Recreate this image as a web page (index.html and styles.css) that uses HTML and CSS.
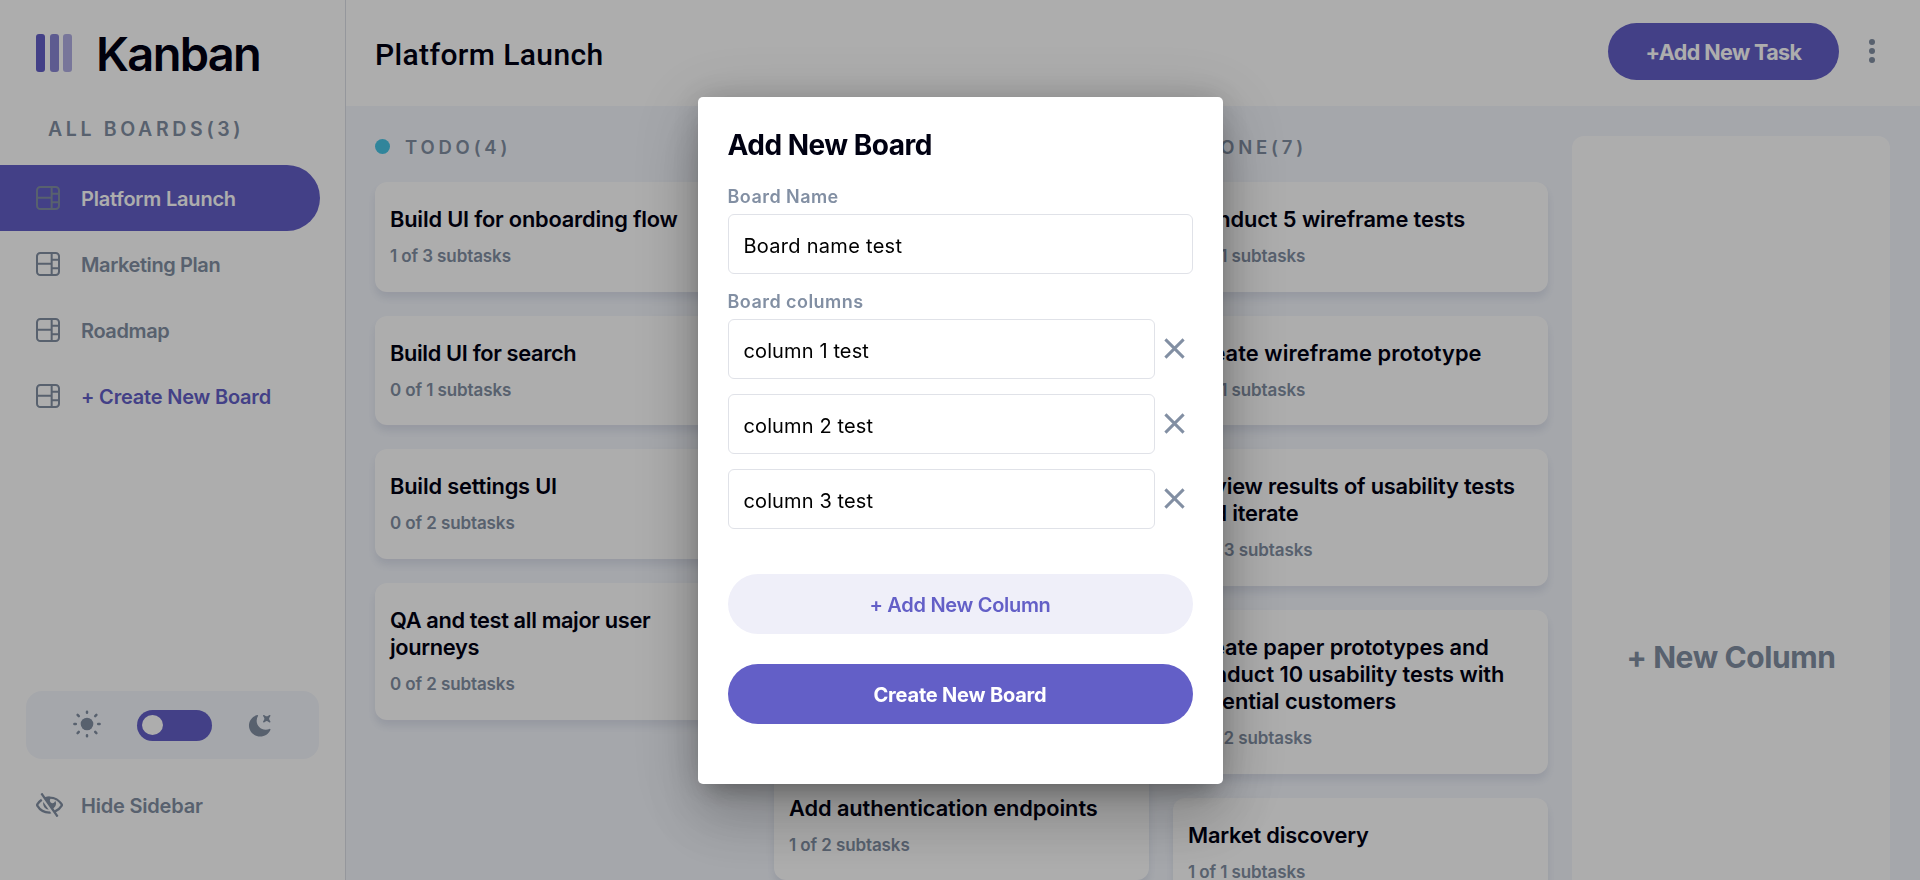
FILE: index.html
```html
<!DOCTYPE html>
<html lang="en">
<head>
<meta charset="utf-8">
<title>Kanban</title>
<link rel="stylesheet" href="styles.css">
</head>
<body>
<svg width="0" height="0" class="defs">
  <symbol id="board" viewBox="0 0 16 16"><path d="M0 2.889A2.889 2.889 0 0 1 2.889 0H13.11A2.889 2.889 0 0 1 16 2.889V13.11A2.888 2.888 0 0 1 13.111 16H2.89A2.889 2.889 0 0 1 0 13.111V2.89Zm1.333 5.555v4.667c0 .859.697 1.556 1.556 1.556h6.889V8.444H1.333Zm8.445-1.333V1.333h-6.89A1.556 1.556 0 0 0 1.334 2.89V7.11h8.445Zm4.889-1.333H11.11v4.444h3.556V5.778Zm0 5.778H11.11v3.11h2a1.556 1.556 0 0 0 1.556-1.555v-1.555Zm0-7.112V2.89a1.555 1.555 0 0 0-1.556-1.556h-2v3.111h3.556Z"/></symbol>
  <symbol id="cross" viewBox="0 0 21 21"><path d="M1.4 1.4l18.2 18.2M19.6 1.4L1.4 19.6" stroke="currentColor" stroke-width="3" fill="none"/></symbol>
</svg>
<div class="app">
  <aside class="sidebar">
    <div class="brand">
      <div class="bars"><i></i><i></i><i></i></div>
      <span class="wordmark">Kanban</span>
    </div>
    <h2 class="boards-title">ALL BOARDS(3)</h2>
    <nav class="nav">
      <a class="item active"><svg class="ico"><use href="#board"/></svg><span class="t-platform">Platform Launch</span></a>
      <a class="item"><svg class="ico"><use href="#board"/></svg><span>Marketing Plan</span></a>
      <a class="item"><svg class="ico"><use href="#board"/></svg><span>Roadmap</span></a>
      <a class="item create"><svg class="ico"><use href="#board"/></svg><span>+ Create New Board</span></a>
    </nav>
    <div class="theme">
      <svg class="sun" viewBox="0 0 28 28" stroke="currentColor" stroke-width="2.5" stroke-linecap="round"><circle cx="14" cy="14" r="6.3" stroke="none"/><path d="M14 1.7v1M14 25.3v1M1.4 14h1.4M25.2 14h1.4M4.6 4.9l1.2 1.2M22.2 21.9l1.2 1.2M23.4 4.9l-1.2 1.2M5.8 21.9l-1.2 1.2"/></svg>
      <div class="switch"><i></i></div>
      <svg class="moon" viewBox="0 0 16 16"><path d="M6.474.682c.434-.11.718.406.481.78A6.067 6.067 0 0 0 6.01 4.72c0 3.418 2.827 6.187 6.314 6.187.89.002 1.77-.182 2.584-.54.408-.18.894.165.724.57-1.16 2.775-3.944 4.73-7.194 4.73-4.292 0-7.771-3.41-7.771-7.615 0-3.541 2.466-6.518 5.807-7.37Zm8.433.07c.442-.294.969.232.674.674l-.525.787a1.943 1.943 0 0 0 0 2.157l.525.788c.295.441-.232.968-.674.673l-.787-.525a1.943 1.943 0 0 0-2.157 0l-.786.525c-.442.295-.97-.232-.675-.673l.525-.788a1.943 1.943 0 0 0 0-2.157l-.525-.787c-.295-.442.232-.968.674-.673l.787.525a1.943 1.943 0 0 0 2.157 0l.787-.525Z"/></svg>
    </div>
    <a class="hide"><svg class="eye" viewBox="0 0 18 16"><path d="M8.522 11.223a4.252 4.252 0 0 1-3.654-5.22l3.654 5.22ZM9 12.25A8.685 8.685 0 0 1 1.5 8a8.612 8.612 0 0 1 2.76-2.864l-.86-1.23A10.112 10.112 0 0 0 .208 7.238a1.5 1.5 0 0 0 0 1.524A10.187 10.187 0 0 0 9 13.75c.414 0 .828-.025 1.239-.074l-1-1.43A8.88 8.88 0 0 1 9 12.25Zm8.792-3.488a10.14 10.14 0 0 1-4.486 4.046l1.504 2.148a.375.375 0 0 1-.092.523l-.648.453a.375.375 0 0 1-.523-.092L3.19 1.044A.375.375 0 0 1 3.282.52L3.93.068a.375.375 0 0 1 .523.092l1.735 2.479A10.308 10.308 0 0 1 9 2.25c3.746 0 7.031 2 8.792 4.988a1.5 1.5 0 0 1 0 1.524ZM16.5 8a8.674 8.674 0 0 0-6.755-4.219A1.75 1.75 0 1 0 12.75 5v-.001a4.25 4.25 0 0 1-1.154 5.366l.834 1.192A8.641 8.641 0 0 0 16.5 8Z"/></svg><span>Hide Sidebar</span></a>
  </aside>
  <div class="main">
    <header class="header">
      <h1>Platform Launch</h1>
      <button class="add-task">+Add New Task</button>
      <div class="dots"><i></i><i></i><i></i></div>
    </header>
    <main class="board">
      <section class="column">
        <h3><i class="dot todo"></i>TODO(4)</h3>
        <article class="card"><h4>Build UI for onboarding flow</h4><p>1 of 3 subtasks</p></article>
        <article class="card"><h4 class="tight">Build UI for search</h4><p>0 of 1 subtasks</p></article>
        <article class="card"><h4>Build settings UI</h4><p>0 of 2 subtasks</p></article>
        <article class="card"><h4 class="tight">QA and test all major user<br>journeys</h4><p>0 of 2 subtasks</p></article>
      </section>
      <section class="column">
        <h3><i class="dot doing"></i>DOING(6)</h3>
        <article class="card"><h4>Design settings and search<br>pages</h4><p>1 of 3 subtasks</p></article>
        <article class="card"><h4>Add account management<br>endpoints</h4><p>2 of 3 subtasks</p></article>
        <article class="card"><h4>Design onboarding flow</h4><p>1 of 3 subtasks</p></article>
        <article class="card"><h4>Add search endpoints</h4><p>1 of 2 subtasks</p></article>
        <article class="card"><h4 class="wide">Add authentication endpoints</h4><p>1 of 2 subtasks</p></article>
      </section>
      <section class="column">
        <h3><i class="dot done"></i>DONE(7)</h3>
        <article class="card"><h4 class="wide">Conduct 5 wireframe tests</h4><p>1 of 1 subtasks</p></article>
        <article class="card"><h4 class="wider">Create wireframe prototype</h4><p>1 of 1 subtasks</p></article>
        <article class="card"><h4>Review results of usability tests<br>and iterate</h4><p>3 of 3 subtasks</p></article>
        <article class="card"><h4 class="wide">Create paper prototypes and<br>conduct 10 usability tests with<br>potential customers</h4><p>2 of 2 subtasks</p></article>
        <article class="card"><h4>Market discovery</h4><p>1 of 1 subtasks</p></article>
      </section>
      <section class="new-column">+ New Column</section>
    </main>
  </div>
</div>
<div class="overlay">
  <form class="modal">
    <h2>Add New Board</h2>
    <label>Board Name</label>
    <input class="name" value="Board name test">
    <label>Board columns</label>
    <div class="rows">
      <div class="row"><input value="column 1 test"><svg><use href="#cross"/></svg></div>
      <div class="row"><input value="column 2 test"><svg><use href="#cross"/></svg></div>
      <div class="row"><input value="column 3 test"><svg><use href="#cross"/></svg></div>
    </div>
    <button type="button" class="secondary">+ Add New Column</button>
    <button type="button" class="primary">Create New Board</button>
  </form>
</div>
</body>
</html>
```

FILE: styles.css
```css
*{box-sizing:border-box;margin:0;padding:0}
body{height:880px;overflow:hidden;font-family:Inter,"Liberation Sans",sans-serif;color:#000112}
i{display:block}
svg{fill:currentColor;display:block;flex:none}
button{border:0;font-family:inherit}
.defs{position:absolute}
.app{display:flex;height:880px;overflow:hidden;background:#f4f7fd}

.sidebar{width:346px;flex:none;background:#fff;border-right:1px solid #dcdfe6;color:#828fa3;display:flex;flex-direction:column}
.brand{display:flex;align-items:center;gap:24px;height:106px;padding-left:36px}
.bars{display:flex;gap:4.5px}
.bars i{width:9px;height:38px;border-radius:3px;background:#635fc7}
.bars i:nth-child(2){opacity:.75}
.bars i:nth-child(3){opacity:.5}
.wordmark{font-size:47px;font-weight:600;letter-spacing:-1.7px;line-height:60px;color:#000112;padding-top:2px}
.boards-title{font-size:19.5px;font-weight:600;letter-spacing:3.65px;line-height:30px;padding:8px 0 0 48px}
.nav{margin-top:21px}
.item{display:flex;align-items:center;height:66px;width:320px;padding-left:36px;gap:21px;border-radius:0 33px 33px 0;font-size:20px;font-weight:600;letter-spacing:-.4px}
.item .ico{width:24px;height:24px}
.item span{padding-top:2px}
.item .t-platform{letter-spacing:-.2px}
.item.active{background:#635fc7}
.item.active span{color:#fff}
.item.create span{color:#635fc7;letter-spacing:-.2px}
.theme{margin:262px 26px 0;height:68px;border-radius:16px;background:#f4f7fd;display:flex;align-items:center;padding-left:47px;width:293px}
.sun{width:28px;height:28px;margin-top:-2px}
.switch{width:75px;height:31px;border-radius:16px;background:#635fc7;margin:0 36px;padding:5px}
.switch i{width:21px;height:20px;border-radius:50%;background:#fff}
.moon{width:23px;height:23px}
.hide{display:flex;align-items:center;gap:18px;margin:33px 0 0 36px;font-size:20px;font-weight:600;letter-spacing:-.2px}
.hide span{padding-top:2px}
.eye{width:27px;height:24px}

.main{flex:1;min-width:0}
.header{height:106px;background:#fff;display:flex;align-items:center;padding:0 0 3px 29px}
.header h1{font:500 30px Roboto,sans-serif;letter-spacing:.38px;flex:1;padding-top:6px}
.add-task{width:231px;height:57px;border-radius:29px;background:#635fc7;color:#fff;font-size:21.5px;font-weight:700;letter-spacing:-.6px;padding-top:1px}
.dots{display:flex;flex-direction:column;gap:3px;margin:0 45px 0 30px;padding-bottom:1px}
.dots i{width:6px;height:6px;border-radius:50%;background:#828fa3}
.board{display:grid;grid-template-columns:375px 375px 375px 318px;gap:24px;padding:30px 0 0 29px;height:774px;overflow:hidden}
.column{display:flex;flex-direction:column;gap:24px}
.column h3{display:flex;align-items:center;gap:15px;height:22px;font-size:18.5px;font-weight:600;letter-spacing:3.8px;color:#828fa3}
.dot{width:15px;height:15px;border-radius:50%;margin-top:-1px}
.todo{background:#49c4e5}.doing{background:#8471f2}.done{background:#67e2ae}
.card{flex:none;background:#fff;border-radius:12px;padding:24px 0 23.67px 15px;box-shadow:0 6px 9px rgba(54,78,126,.12)}
.card h4{font-size:21.8px;font-weight:600;line-height:27px;letter-spacing:-.18px;white-space:nowrap}
.card h4.tight{letter-spacing:-.35px}
.card h4.wide{letter-spacing:-.08px}
.card h4.wider{letter-spacing:.08px}
.card p{font-size:17px;font-weight:600;line-height:24px;margin-top:11px;letter-spacing:-.1px;color:#828fa3}
.new-column{background:#fff;border-radius:12px;height:1041px;display:flex;align-items:center;justify-content:center;font-size:30px;font-weight:700;letter-spacing:-.4px;color:#828fa3}

.overlay{position:fixed;inset:0;background:rgba(0,0,0,.32);display:flex;align-items:center;justify-content:center}
.modal{width:525px;height:687px;background:#fff;border-radius:5px;padding:32px 30px 0;display:flex;flex-direction:column;box-shadow:0 16.5px 22.5px -10.5px rgba(0,0,0,.2),0 36px 57px 4.5px rgba(0,0,0,.14),0 13.5px 69px 12px rgba(0,0,0,.12),0 0 30px rgba(0,0,0,.15)}
.modal h2{font-size:28px;font-weight:700;letter-spacing:-.5px;line-height:32px}
.modal label{font-size:18px;font-weight:600;letter-spacing:.45px;line-height:24px;color:#828fa3;margin:16px 0 5px}
.modal h2 + label{margin:24px 0 5px}
.modal input{height:60px;flex:none;border:1px solid #e0e2e8;border-radius:6px;padding:4px 15px 0;font:400 20px Inter,sans-serif;letter-spacing:.28px;color:#000;min-width:0}
.modal .row input{letter-spacing:.12px}
.rows{display:flex;flex-direction:column;gap:15px}
.row{display:flex;align-items:center;color:#828fa3}
.row input{width:427px}
.row svg{width:21px;height:21px;margin-left:9px}
.secondary,.primary{height:60px;flex:none;border-radius:30px;font-size:20px;font-weight:600;letter-spacing:-.3px;padding-top:2px}
.secondary{margin-top:45px;background:#efeff9;color:#635fc7}
.primary{margin-top:30px;background:#635fc7;color:#fff;font-weight:700;letter-spacing:-.2px}
```
